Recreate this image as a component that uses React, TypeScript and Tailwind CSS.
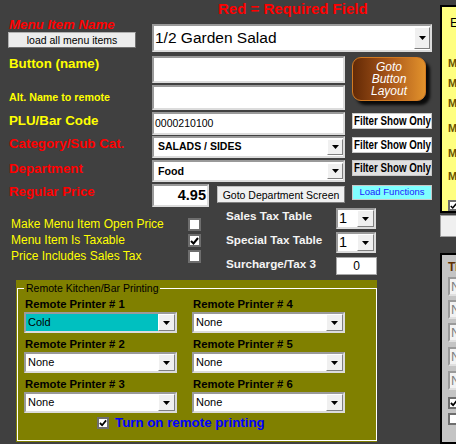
import React from "react";

const Arrow = () => (
  <svg width="7" height="4" viewBox="0 0 7 4">
    <path d="M0 0h7L3.5 4z" fill="#000" />
  </svg>
);

function DropBtn({ className = "" }: { className?: string }) {
  return (
    <div
      className={`flex shrink-0 items-center justify-center bg-[#f0f0f0] border border-t-white border-l-white border-b-[#808080] border-r-[#808080] ${className}`}
    >
      <Arrow />
    </div>
  );
}

function Combo({
  text,
  className = "",
  textClass = "",
  btn = "w-[16px] h-[18px]",
}: {
  text: string;
  className?: string;
  textClass?: string;
  btn?: string;
}) {
  return (
    <div
      className={`flex items-center justify-between border-2 border-[#9a9a9a] border-b-[#dcdcdc] border-r-[#dcdcdc] ${className}`}
    >
      <span className={`whitespace-nowrap ${textClass}`}>{text}</span>
      <DropBtn className={btn} />
    </div>
  );
}

function Check({ on = false, className = "" }: { on?: boolean; className?: string }) {
  return (
    <div className={`flex items-center justify-center bg-white border-2 border-[#6e6e6e] ${className}`}>
      {on && (
        <svg width="9" height="8" viewBox="0 0 9 8">
          <path d="M1 4l2.5 2.5L8 1" stroke="#000" strokeWidth="2" fill="none" />
        </svg>
      )}
    </div>
  );
}

function Filter({ gray = false }: { gray?: boolean }) {
  return (
    <div
      className={`w-[80px] h-[16px] flex items-center overflow-hidden border border-[#c8c8c8] pl-[1px] ${
        gray ? "bg-[#e0e0e0]" : "bg-white"
      }`}
    >
      <span className="inline-block origin-left scale-x-[0.78] whitespace-nowrap text-[12.5px] leading-[14px] font-bold text-black">
        Filter Show Only
      </span>
    </div>
  );
}

const inputBox = "bg-white border-2 border-[#9a9a9a] border-b-[#dcdcdc] border-r-[#dcdcdc]";

function Printer({ n, value, cyan = false }: { n: number; value: string; cyan?: boolean }) {
  return (
    <div className="flex flex-col">
      <div className="h-[14px] pl-[1px] text-[11.3px] leading-[13px] font-bold text-black whitespace-nowrap">
        Remote Printer # {n}
      </div>
      <Combo
        text={value}
        className={`h-[21px] w-[153px] pl-[2px] ${cyan ? "bg-[#00c0c0]" : "bg-white"}`}
        textClass="text-[11px] text-black"
        btn="w-[17px] h-[17px]"
      />
    </div>
  );
}

export default function App() {
  return (
    <div className="w-[456px] h-[444px] overflow-hidden bg-[#404040] flex font-['Liberation_Sans',Arial,sans-serif]">
      {/* main form */}
      <div className="w-[440px] shrink-0 flex flex-col">
        <div className="h-[18px] pl-[218px] text-[15px] leading-[17px] font-bold text-[#ff0000] whitespace-nowrap">
          Red = Required Field
        </div>

        <div className="flex h-[34px]">
          <div className="w-[152px] flex flex-col">
            <div className="h-[14px] pl-[9px] text-[13.3px] leading-[14px] font-bold italic text-[#ff0000] whitespace-nowrap">
              Menu Item Name
            </div>
            <button className="ml-[8px] w-[128px] h-[16px] bg-[#ececec] border border-[#b0b0b0] border-b-[#707070] border-r-[#707070] text-[10.5px] leading-[12px] text-black">
              load all menu items
            </button>
          </div>
          <Combo
            text="1/2 Garden Salad"
            className="mt-[6px] w-[280px] h-[28px] bg-white pl-[1px] pr-[0px]"
            textClass="text-[15.5px] text-black"
            btn="w-[16px] h-[22px]"
          />
        </div>

        <div className="flex">
          <div className="w-[352px] pt-[4px] flex flex-col">
            <div className="flex h-[28px]">
              <div className="w-[152px] pl-[9px] text-[13.3px] leading-[16px] font-bold text-[#ffff00]">Button (name)</div>
              <div className={`w-[193px] h-[27px] ${inputBox}`} />
            </div>
            <div className="flex h-[27px]">
              <div className="w-[152px] pl-[9px] pt-[6px] text-[10.7px] leading-[14px] font-bold text-[#ffff00] whitespace-nowrap">
                Alt. Name to remote
              </div>
              <div className={`mt-[1px] w-[193px] h-[25px] ${inputBox}`} />
            </div>
            <div className="flex h-[24px]">
              <div className="w-[152px] pl-[9px] pt-[2px] text-[13.3px] leading-[16px] font-bold text-[#ffff00]">PLU/Bar Code</div>
              <div className={`mt-[1px] w-[193px] h-[23px] flex items-center pl-[1px] text-[10.5px] text-black ${inputBox}`}>
                0000210100
              </div>
            </div>
            <div className="flex h-[24px]">
              <div className="w-[152px] pl-[9px] pt-[1px] text-[13.3px] leading-[16px] font-bold text-[#ff0000] whitespace-nowrap">
                Category/Sub Cat.
              </div>
              <Combo
                text="SALADS / SIDES"
                className="mt-[1px] w-[193px] h-[22px] bg-white pl-[4px]"
                textClass="text-[10.5px] font-bold text-black"
                btn="w-[16px] h-[16px]"
              />
            </div>
            <div className="flex h-[24px]">
              <div className="w-[152px] pl-[9px] pt-[2px] text-[13.3px] leading-[16px] font-bold text-[#ff0000]">Department</div>
              <Combo
                text="Food"
                className="mt-[1px] w-[193px] h-[22px] bg-white pl-[4px]"
                textClass="text-[10.7px] font-bold text-black"
                btn="w-[16px] h-[16px]"
              />
            </div>
            <div className="flex h-[25px]">
              <div className="w-[152px] pl-[9px] pt-[1px] text-[13.3px] leading-[16px] font-bold text-[#ff0000]">Regular Price</div>
              <div className={`mt-[1px] w-[57px] h-[23px] flex items-center justify-end pr-[1px] text-[14.5px] font-bold text-black ${inputBox}`}>
                4.95
              </div>
              <button className="ml-[8px] mt-[3px] w-[128px] h-[17px] bg-[#f0f0f0] border border-[#c0c0c0] border-b-[#808080] border-r-[#808080] text-[10.5px] leading-[12px] text-black whitespace-nowrap">
                Goto Department Screen
              </button>
            </div>
          </div>

          <div className="w-[80px] flex flex-col">
            <div className="mt-[5px] w-[74px] h-[44px] rounded-[9px] border border-[#d27a22] bg-linear-to-r from-[#642a06] via-[#a8561a] to-[#e2922c] shadow-[4px_4px_3px_rgba(0,0,0,0.85)] flex flex-col items-center justify-center text-white italic text-[12px] leading-[12px]">
              <span>Goto</span>
              <span>Button</span>
              <span>Layout</span>
            </div>
            <div className="mt-[12px]">
              <Filter />
            </div>
            <div className="mt-[8px]">
              <Filter />
            </div>
            <div className="mt-[7px]">
              <Filter gray />
            </div>
            <div className="mt-[9px] w-[80px] h-[15px] bg-[#80ffff] border border-[#c8c8c8] flex items-center justify-center text-[9.5px] text-[#1a1aff] whitespace-nowrap">
              Load Functions
            </div>
          </div>
        </div>

        {/* options & tax */}
        <div className="flex h-[72px]">
          <div className="w-[226px] pl-[11px] pt-[8px] flex flex-col">
            {[
              ["Make Menu Item Open Price", false],
              ["Menu Item Is Taxable", true],
              ["Price Includes Sales Tax", false],
            ].map(([label, on]) => (
              <div key={label as string} className="flex h-[16px] items-start">
                <span className="w-[177px] text-[12px] leading-[16px] text-[#ffff00] whitespace-nowrap">{label as string}</span>
                <Check on={on as boolean} className="mt-[2px] w-[13px] h-[13px]" />
              </div>
            ))}
          </div>
          <div className="flex flex-col">
            <div className="flex h-[24px]">
              <div className="w-[110px] pt-[1px] text-[11.7px] leading-[14px] font-bold text-[#f4f4f4]">Sales Tax Table</div>
              <Combo text="1" className="w-[40px] h-[21px] bg-white pl-[1px]" textClass="text-[14.5px] text-black" btn="w-[17px] h-[17px]" />
            </div>
            <div className="flex h-[25px]">
              <div className="w-[110px] pt-[1px] text-[11.7px] leading-[14px] font-bold text-[#f4f4f4]">Special Tax Table</div>
              <Combo text="1" className="w-[40px] h-[21px] bg-white pl-[1px]" textClass="text-[14.5px] text-black" btn="w-[17px] h-[17px]" />
            </div>
            <div className="flex">
              <div className="w-[110px] text-[11.7px] leading-[14px] font-bold text-[#f4f4f4]">Surcharge/Tax 3</div>
              <div className="w-[41px] h-[18px] bg-white border border-[#a8a8a8] flex items-center justify-center text-[12px] text-black">0</div>
            </div>
          </div>
        </div>

        {/* remote printing */}
        <div className="ml-[16px] w-[361px] h-[162px] bg-[#808000] pt-[2px] pl-[1px]">
          <fieldset className="w-[360px] h-[159px] border border-white pl-[6px]">
            <legend className="px-[2px] text-[10.5px] leading-[12px] text-black">Remote Kitchen/Bar Printing</legend>
            <div className="mt-[4px] grid grid-cols-[153px_153px] gap-x-[15px] gap-y-[5px]">
              <Printer n={1} value="Cold" cyan />
              <Printer n={4} value="None" />
              <Printer n={2} value="None" />
              <Printer n={5} value="None" />
              <Printer n={3} value="None" />
              <Printer n={6} value="None" />
            </div>
            <div className="mt-[3px] flex items-center h-[14px] pl-[73px]">
              <Check on className="w-[12px] h-[12px]" />
              <span className="ml-[6px] text-[13.3px] leading-[14px] font-bold text-[#0000ff] whitespace-nowrap">
                Turn on remote printing
              </span>
            </div>
          </fieldset>
        </div>
      </div>

      {/* right edge panels */}
      <div className="flex-1 min-w-0 flex flex-col">
        <div className="mt-[5px] w-[120px] h-[208px] shrink-0 bg-[#ffff80] border-2 border-black pl-[6px] flex flex-col">
          <div className="pt-[9px] pl-[2px] text-[12.5px] leading-[14px] text-black">E</div>
          {[27, 7, 7, 12, 12, 10].map((m, i) => (
            <div
              key={i}
              className="text-[11px] leading-[13px] font-bold text-[#6b5200]"
              style={{ marginTop: m }}
            >
              M
            </div>
          ))}
          <Check on className="mt-[17px] w-[11px] h-[11px]" />
        </div>
        <div className="mt-[2px] w-[120px] h-[22px] shrink-0 bg-[#f0f0f0] border border-[#a0a0a0]" />
        <div className="mt-[16px] w-[120px] h-[191px] shrink-0 bg-[#c4c4c4] border-2 border-black pl-[6px] pt-[5px] flex flex-col">
          <div className="text-[12px] leading-[14px] font-bold text-[#603000]">Ti</div>
          {[3, 4, 4, 5, 5].map((m, i) => (
            <div
              key={i}
              className="w-[80px] h-[19px] shrink-0 bg-[#f2f2f2] border-2 border-[#9a9a9a] border-b-[#e0e0e0] border-r-[#e0e0e0] pl-[1px] text-[13px] leading-[15px] text-[#808080]"
              style={{ marginTop: m }}
            >
              N
            </div>
          ))}
          <Check on className="mt-[7px] w-[12px] h-[12px]" />
          <Check className="mt-[4px] w-[12px] h-[12px]" />
        </div>
      </div>
    </div>
  );
}
